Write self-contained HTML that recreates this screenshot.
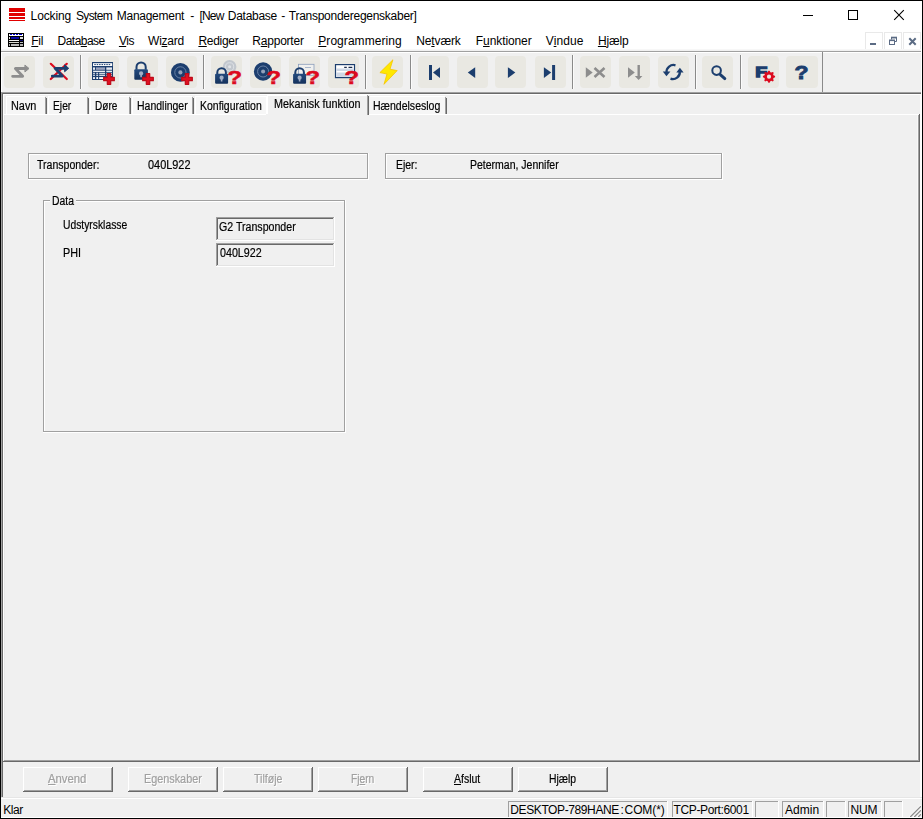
<!DOCTYPE html>
<html lang="da"><head><meta charset="utf-8"><title>Locking System Management</title>
<style>
html,body{margin:0;padding:0}
body{width:923px;height:819px;overflow:hidden;position:relative;background:#fff;font-family:"Liberation Sans",sans-serif}
#w{position:absolute;left:0;top:0;width:923px;height:819px;overflow:hidden}
#w div,#w span,#w svg{position:absolute}
#w span{white-space:pre}
#w u{text-decoration:underline;text-underline-offset:1px;text-decoration-thickness:1px}
</style></head><body><div id="w">
<div style="left:0px;top:0px;width:923px;height:819px;background:#000;"></div>
<div style="left:1px;top:1px;width:921px;height:817px;background:#fff;"></div>
<div style="left:9px;top:8px;width:16px;height:4px;background:#e10000;"></div>
<div style="left:9px;top:13px;width:16px;height:3px;background:#e10000;"></div>
<div style="left:9px;top:17px;width:16px;height:2px;background:#e10000;"></div>
<div style="left:9px;top:20px;width:16px;height:1px;background:#e10000;"></div>
<span style="left:30.60px;top:10.00px;font-size:12px;line-height:12px;letter-spacing:-0.125px;color:#000;">Locking </span>
<span style="left:76.00px;top:10.00px;font-size:12px;line-height:12px;letter-spacing:-0.669px;color:#000;">System </span>
<span style="left:116.80px;top:10.00px;font-size:12px;line-height:12px;letter-spacing:-0.275px;color:#000;">Management </span>
<span style="left:190.30px;top:10.00px;font-size:12px;line-height:12px;letter-spacing:0.300px;color:#000;">- </span>
<span style="left:199.60px;top:10.00px;font-size:12px;line-height:12px;letter-spacing:-0.861px;color:#000;">[New </span>
<span style="left:227.80px;top:10.00px;font-size:12px;line-height:12px;letter-spacing:-0.272px;color:#000;">Database </span>
<span style="left:281.20px;top:10.00px;font-size:12px;line-height:12px;color:#000;">- </span>
<span style="left:288.80px;top:10.00px;font-size:12px;line-height:12px;letter-spacing:-0.265px;color:#000;">Transponderegenskaber]</span>
<div style="left:803px;top:15px;width:10px;height:1px;background:#000;"></div>
<div style="left:848px;top:10px;width:10px;height:10px;background:transparent;border:1px solid #000;box-sizing:border-box"></div>
<svg style="left:893px;top:9px" width="12" height="12" viewBox="0 0 12 12"><path d="M1.2 1.2 L10.8 10.8 M10.8 1.2 L1.2 10.8" stroke="#000" stroke-width="1.1" fill="none"/></svg>
<div style="left:8px;top:33px;width:16px;height:14px;background:#000;"></div>
<div style="left:9px;top:34px;width:14px;height:2px;background:#fff;"></div>
<div style="left:10px;top:34px;width:2px;height:1px;background:#0000d0;"></div>
<div style="left:13px;top:34px;width:2px;height:1px;background:#0000d0;"></div>
<div style="left:16px;top:34px;width:2px;height:1px;background:#0000d0;"></div>
<div style="left:19px;top:34px;width:2px;height:1px;background:#0000d0;"></div>
<div style="left:21px;top:34px;width:1px;height:1px;background:#0000d0;"></div>
<div style="left:9px;top:37px;width:1px;height:2px;background:#e8e8e8;"></div>
<div style="left:11px;top:37px;width:8px;height:2px;background:#0a0aa8;"></div>
<div style="left:20px;top:37px;width:3px;height:2px;background:#e0e0e0;"></div>
<div style="left:9px;top:40px;width:10px;height:1px;background:#f0f0f0;"></div>
<div style="left:20px;top:40px;width:3px;height:1px;background:#101070;"></div>
<div style="left:9px;top:42px;width:10px;height:1px;background:#d8d8d0;"></div>
<div style="left:20px;top:42px;width:3px;height:1px;background:#c0c0c0;"></div>
<div style="left:9px;top:44px;width:1px;height:2px;background:#b0b0b0;"></div>
<div style="left:11px;top:44px;width:8px;height:2px;background:#b8b8b8;"></div>
<div style="left:20px;top:44px;width:3px;height:2px;background:#b0b0b0;"></div>
<span style="left:31.30px;top:35.00px;font-size:12px;line-height:12px;letter-spacing:-0.324px;color:#000;"><u>F</u>il</span>
<span style="left:57.60px;top:35.00px;font-size:12px;line-height:12px;letter-spacing:-0.547px;color:#000;">Data<u>b</u>ase</span>
<span style="left:118.90px;top:35.00px;font-size:12px;line-height:12px;letter-spacing:-0.484px;color:#000;"><u>V</u>is</span>
<span style="left:148.10px;top:35.00px;font-size:12px;line-height:12px;letter-spacing:-0.257px;color:#000;">Wi<u>z</u>ard</span>
<span style="left:198.40px;top:35.00px;font-size:12px;line-height:12px;letter-spacing:-0.290px;color:#000;"><u>R</u>ediger</span>
<span style="left:252.30px;top:35.00px;font-size:12px;line-height:12px;letter-spacing:-0.219px;color:#000;">R<u>a</u>pporter</span>
<span style="left:318.30px;top:35.00px;font-size:12px;line-height:12px;letter-spacing:0.046px;color:#000;"><u>P</u>rogrammering</span>
<span style="left:416.20px;top:35.00px;font-size:12px;line-height:12px;letter-spacing:-0.121px;color:#000;">Ne<u>t</u>værk</span>
<span style="left:475.80px;top:35.00px;font-size:12px;line-height:12px;letter-spacing:-0.090px;color:#000;">F<u>u</u>nktioner</span>
<span style="left:545.80px;top:35.00px;font-size:12px;line-height:12px;letter-spacing:0.074px;color:#000;">V<u>i</u>ndue</span>
<span style="left:597.90px;top:35.00px;font-size:12px;line-height:12px;letter-spacing:-0.169px;color:#000;"><u>H</u>jælp</span>
<div style="left:865px;top:32px;width:18px;height:18px;background:#fff;border:1px solid #e9e9e9;box-sizing:border-box"></div>
<div style="left:884px;top:32px;width:18px;height:18px;background:#fff;border:1px solid #e9e9e9;box-sizing:border-box"></div>
<div style="left:903px;top:32px;width:18px;height:18px;background:#fff;border:1px solid #e9e9e9;box-sizing:border-box"></div>
<div style="left:870px;top:43px;width:6px;height:2px;background:#5b6b84;"></div>
<svg style="left:888px;top:36px" width="10" height="10" viewBox="0 0 10 10"><g fill="none" stroke="#5b6b84"><path d="M3.5 3.5 V1.75 H8.5 V5.5 H6.5" stroke-width="1"/><path d="M3 1.5 H9" stroke-width="1.6"/><rect x="1.5" y="4.5" width="5" height="4" stroke-width="1"/><path d="M1 4.3 H7" stroke-width="1.6"/></g></svg>
<svg style="left:908px;top:37px" width="9" height="9" viewBox="0 0 9 9"><path d="M1.3 1.3 L7.7 7.7 M7.7 1.3 L1.3 7.7" stroke="#5b6b84" stroke-width="2" fill="none"/></svg>
<div style="left:1px;top:49px;width:920px;height:1px;background:#f7f7f7;"></div>
<div style="left:1px;top:50px;width:920px;height:1px;background:#f1f1f1;"></div>
<div style="left:1px;top:51px;width:920px;height:1px;background:#a0a0a0;"></div>
<div style="left:1px;top:52px;width:920px;height:1px;background:#fff;"></div>
<div style="left:1px;top:53px;width:920px;height:39px;background:#f0f0f0;"></div>
<div style="left:1px;top:52px;width:1px;height:40px;background:#fff;"></div>
<div style="left:4px;top:56px;width:31px;height:32px;background:#e9e8e2;border-radius:4px"></div>
<div style="left:43px;top:56px;width:31px;height:32px;background:#e9e8e2;border-radius:4px"></div>
<div style="left:88px;top:56px;width:31px;height:32px;background:#e9e8e2;border-radius:4px"></div>
<div style="left:127px;top:56px;width:31px;height:32px;background:#e9e8e2;border-radius:4px"></div>
<div style="left:166px;top:56px;width:31px;height:32px;background:#e9e8e2;border-radius:4px"></div>
<div style="left:211px;top:56px;width:31px;height:32px;background:#e9e8e2;border-radius:4px"></div>
<div style="left:250px;top:56px;width:31px;height:32px;background:#e9e8e2;border-radius:4px"></div>
<div style="left:289px;top:56px;width:31px;height:32px;background:#e9e8e2;border-radius:4px"></div>
<div style="left:328px;top:56px;width:31px;height:32px;background:#e9e8e2;border-radius:4px"></div>
<div style="left:372px;top:56px;width:31px;height:32px;background:#e9e8e2;border-radius:4px"></div>
<div style="left:418px;top:56px;width:31px;height:32px;background:#e9e8e2;border-radius:4px"></div>
<div style="left:457px;top:56px;width:31px;height:32px;background:#e9e8e2;border-radius:4px"></div>
<div style="left:495px;top:56px;width:31px;height:32px;background:#e9e8e2;border-radius:4px"></div>
<div style="left:535px;top:56px;width:31px;height:32px;background:#e9e8e2;border-radius:4px"></div>
<div style="left:580px;top:56px;width:31px;height:32px;background:#e9e8e2;border-radius:4px"></div>
<div style="left:619px;top:56px;width:31px;height:32px;background:#e9e8e2;border-radius:4px"></div>
<div style="left:658px;top:56px;width:31px;height:32px;background:#e9e8e2;border-radius:4px"></div>
<div style="left:702px;top:56px;width:31px;height:32px;background:#e9e8e2;border-radius:4px"></div>
<div style="left:748px;top:56px;width:31px;height:32px;background:#e9e8e2;border-radius:4px"></div>
<div style="left:786px;top:56px;width:32px;height:32px;background:#e9e8e2;border-radius:4px"></div>
<div style="left:80px;top:55px;width:1px;height:34px;background:#8a8a8a;"></div>
<div style="left:81px;top:55px;width:1px;height:34px;background:#fbfbfb;"></div>
<div style="left:203px;top:55px;width:1px;height:34px;background:#8a8a8a;"></div>
<div style="left:204px;top:55px;width:1px;height:34px;background:#fbfbfb;"></div>
<div style="left:365px;top:55px;width:1px;height:34px;background:#8a8a8a;"></div>
<div style="left:366px;top:55px;width:1px;height:34px;background:#fbfbfb;"></div>
<div style="left:410px;top:55px;width:1px;height:34px;background:#8a8a8a;"></div>
<div style="left:411px;top:55px;width:1px;height:34px;background:#fbfbfb;"></div>
<div style="left:572px;top:55px;width:1px;height:34px;background:#8a8a8a;"></div>
<div style="left:573px;top:55px;width:1px;height:34px;background:#fbfbfb;"></div>
<div style="left:695px;top:55px;width:1px;height:34px;background:#8a8a8a;"></div>
<div style="left:696px;top:55px;width:1px;height:34px;background:#fbfbfb;"></div>
<div style="left:740px;top:55px;width:1px;height:34px;background:#8a8a8a;"></div>
<div style="left:741px;top:55px;width:1px;height:34px;background:#fbfbfb;"></div>
<div style="left:822px;top:52px;width:1px;height:40px;background:#8a8a8a;"></div>
<svg style="left:0;top:52px" width="923" height="40" viewBox="0 0 923 40"><g transform="translate(10.2,12)" fill="none" stroke="#8d8d8d" stroke-width="2.8" stroke-linejoin="round" stroke-linecap="round"><path d="M2.4 12.3 H12.5 L5.2 4.5 H15"/><path d="M15 1.3 L18.8 4.5 L15 7.700 Z" fill="#8d8d8d" stroke-width="1"/></g><path d="M50.8 11.8 L66.8 27 M66.8 11.8 L50.8 27" stroke="#dc0a1e" stroke-width="2.2" stroke-linecap="round"/><g transform="translate(49.9,11.8)" fill="none" stroke="#1c3e6e" stroke-width="2.8" stroke-linejoin="round" stroke-linecap="round"><path d="M2.4 12.3 H12.5 L5.2 4.5 H15"/><path d="M15 1.3 L18.8 4.5 L15 7.700 Z" fill="#1c3e6e" stroke-width="1"/></g><rect x="92" y="10" width="21" height="18" fill="#1c3e6e"/><rect x="93" y="11.2" width="19.2" height="2.8" fill="#fff"/><path d="M94.3 12.6 H111" stroke="#1c3e6e" stroke-width="1" stroke-dasharray="1.5 0.9"/><rect x="93.1" y="15.4" width="1.8" height="2.4" fill="#fff"/><rect x="95.9" y="15.4" width="9.1" height="2.4" fill="#9ea6c0"/><rect x="106.3" y="15.4" width="5.7" height="2.4" fill="#e4e7ee"/><rect x="93.1" y="18.7" width="11.9" height="1.2" fill="#fff"/><rect x="106.3" y="18.7" width="5.7" height="1.2" fill="#fff"/><rect x="93.1" y="20.8" width="1.8" height="1.0" fill="#fff"/><rect x="96.3" y="20.8" width="1.8" height="1.0" fill="#fff"/><rect x="99.2" y="20.8" width="5.8" height="1.0" fill="#fff"/><rect x="106.3" y="20.8" width="5.7" height="1.0" fill="#fff"/><rect x="93.1" y="22.7" width="1.8" height="1.1" fill="#fff"/><rect x="96.3" y="22.7" width="1.8" height="1.1" fill="#fff"/><rect x="99.2" y="22.7" width="5.8" height="1.1" fill="#fff"/><rect x="106.3" y="22.7" width="5.7" height="1.1" fill="#fff"/><rect x="93.1" y="25.1" width="1.8" height="1.9" fill="#fff"/><rect x="96.3" y="25.1" width="1.8" height="1.9" fill="#fff"/><rect x="99.2" y="25.1" width="5.8" height="1.9" fill="#fff"/><rect x="106.3" y="25.1" width="5.7" height="1.9" fill="#fff"/><path d="M107.3 21.7 H110.7 V25.3 H114.3 V28.7 H110.7 V32.3 H107.3 V28.7 H103.7 V25.3 H107.3 Z" fill="#e01020" stroke="#bf0a18" stroke-width="1.2" stroke-linejoin="round"/><defs><linearGradient id="lg" x1="0" y1="0" x2="0" y2="1"><stop offset="0" stop-color="#234a7d"/><stop offset="1" stop-color="#15325c"/></linearGradient></defs><path d="M136.5 17.7 V14.999999999999998 a4.6 4.6 0 0 1 9.2 0 V17.7" fill="none" stroke="#1c3e6e" stroke-width="2"/><rect x="134.3" y="17.2" width="13.6" height="10.6" rx="1" fill="url(#lg)"/><circle cx="141.10000000000002" cy="21.44" r="2.1" fill="#a3b0c6"/><rect x="140.3" y="21.44" width="1.6" height="3.800" fill="#a3b0c6"/><path d="M146.3 21.7 H149.7 V25.3 H153.3 V28.7 H149.7 V32.3 H146.3 V28.7 H142.7 V25.3 H146.3 Z" fill="#e01020" stroke="#bf0a18" stroke-width="1.2" stroke-linejoin="round"/><circle cx="180.4" cy="20.4" r="9.4" fill="#1c3e6e"/><circle cx="180.4" cy="20.4" r="5.64" fill="none" stroke="#7088aa" stroke-width="0.9"/><circle cx="180.4" cy="20.4" r="2.07" fill="#93a1ba"/><path d="M185.3 21.7 H188.7 V25.3 H192.3 V28.7 H188.7 V32.3 H185.3 V28.7 H181.7 V25.3 H185.3 Z" fill="#e01020" stroke="#bf0a18" stroke-width="1.2" stroke-linejoin="round"/><circle cx="229.6" cy="14.8" r="6.8" fill="#c2c7ce"/><circle cx="229.6" cy="14.8" r="4.08" fill="none" stroke="#dfe2e6" stroke-width="0.9"/><circle cx="229.6" cy="14.8" r="1.50" fill="#e2e4e8"/><path d="M217.29999999999998 22.2 V20.5 a4.3 4.3 0 0 1 8.6 0 V22.2" fill="none" stroke="#1c3e6e" stroke-width="2"/><rect x="215.1" y="21.7" width="13" height="10" rx="1" fill="url(#lg)"/><circle cx="221.6" cy="25.70" r="2.1" fill="#a3b0c6"/><rect x="220.79999999999998" y="25.70" width="1.6" height="3.800" fill="#a3b0c6"/><text transform="translate(227.6,32.1) scale(1.36,1)" x="0" y="0" font-family="Liberation Sans, sans-serif" font-weight="bold" font-size="17.5" fill="#dc0a1e" stroke="#dc0a1e" stroke-width="0.5">?</text><circle cx="263.1" cy="19.5" r="9.2" fill="#1c3e6e"/><circle cx="263.1" cy="19.5" r="5.52" fill="none" stroke="#7088aa" stroke-width="0.9"/><circle cx="263.1" cy="19.5" r="2.02" fill="#93a1ba"/><text transform="translate(266.6,32.1) scale(1.36,1)" x="0" y="0" font-family="Liberation Sans, sans-serif" font-weight="bold" font-size="17.5" fill="#dc0a1e" stroke="#dc0a1e" stroke-width="0.5">?</text><rect x="298.5" y="12.3" width="15.5" height="11" fill="#f0f0ee" stroke="#8a9dbb" stroke-width="0.8"/><path d="M305 15.5 H311" stroke="#a9b6cb" stroke-width="1"/><path d="M295.3 22.2 V20.5 a4.3 4.3 0 0 1 8.6 0 V22.2" fill="none" stroke="#1c3e6e" stroke-width="2"/><rect x="293.1" y="21.7" width="13" height="10" rx="1" fill="url(#lg)"/><circle cx="299.6" cy="25.70" r="2.1" fill="#a3b0c6"/><rect x="298.8" y="25.70" width="1.6" height="3.800" fill="#a3b0c6"/><text transform="translate(305.6,32.1) scale(1.36,1)" x="0" y="0" font-family="Liberation Sans, sans-serif" font-weight="bold" font-size="17.5" fill="#dc0a1e" stroke="#dc0a1e" stroke-width="0.5">?</text><rect x="335.5" y="12.6" width="19" height="13" fill="#fff" stroke="#1c3e6e" stroke-width="1.2"/><rect x="336.3" y="16.500" width="17.400" height="2.500" fill="#cfd8e6"/><rect x="336.3" y="20.500" width="17.400" height="4.300" fill="#cfd8e6"/><path d="M344.2 15.3 H346.8 M348.500 15.300 H352.300" stroke="#1b2b4a" stroke-width="1.3"/><text transform="translate(344.6,32.1) scale(1.36,1)" x="0" y="0" font-family="Liberation Sans, sans-serif" font-weight="bold" font-size="17.5" fill="#dc0a1e" stroke="#dc0a1e" stroke-width="0.5">?</text><path d="M392.9 7.8 L379.9 20.6 L387 22 L384 32.300 L397.2 18.600 L390 17.200 Z" fill="#ffe800" stroke="#f6c400" stroke-width="0.8" stroke-linejoin="round"/><rect x="429" y="13" width="3" height="15" fill="#1c3e6e"/><path d="M433 20.500 L440 15.200 V26 Z" fill="#1c3e6e"/><path d="M467.800 20.500 L475.200 15.200 V26 Z" fill="#1c3e6e"/><path d="M515.300 20.500 L507.900 15.200 V26 Z" fill="#1c3e6e"/><path d="M551.200 20.500 L543.900 15.200 V26 Z" fill="#1c3e6e"/><rect x="552.100" y="13" width="3" height="15" fill="#1c3e6e"/><path d="M592.700 20.500 L585.800 15.200 V25.800 Z" fill="#8d8d8d"/><path d="M594.500 16 L604.500 25 M604.500 16 L594.500 25" stroke="#8d8d8d" stroke-width="2.600"/><path d="M634.800 20.500 L628 15.200 V25.800 Z" fill="#8d8d8d"/><path d="M638.700 13 V25" stroke="#8d8d8d" stroke-width="2.400"/><path d="M634.800 24 H642.400 L638.600 28 Z" fill="#8d8d8d"/><g fill="none" stroke="#1c3e6e" stroke-width="2.300"><path d="M675.500 13.300 A7 7 0 0 0 666.500 20.500"/><path d="M670.500 26.700 A7 7 0 0 0 679.800 19.500"/></g><path d="M662.800 19.600 H670.400 L666.500 24.200 Z" fill="#1c3e6e"/><path d="M676.300 20.400 H683.600 L679.900 15.800 Z" fill="#1c3e6e"/><circle cx="716.600" cy="18.600" r="4.300" fill="none" stroke="#1c3e6e" stroke-width="2"/><path d="M720.300 22.600 L724.800 26.600" stroke="#1c3e6e" stroke-width="3" stroke-linecap="round"/><text transform="translate(755.3,25.2) scale(1.3,1)" x="0" y="0" font-family="Liberation Sans, sans-serif" font-weight="bold" font-size="15.2" fill="#1c3e6e" stroke="#1c3e6e" stroke-width="1.3">F</text><path d="M775.07 24.10 L775.07 25.30 L773.50 26.06 L773.15 26.92 L773.72 28.57 L772.87 29.42 L771.22 28.85 L770.36 29.20 L769.60 30.77 L768.40 30.77 L767.64 29.20 L766.78 28.85 L765.13 29.42 L764.28 28.57 L764.85 26.92 L764.50 26.06 L762.93 25.30 L762.93 24.10 L764.50 23.34 L764.85 22.48 L764.28 20.83 L765.13 19.98 L766.78 20.55 L767.64 20.20 L768.40 18.63 L769.60 18.63 L770.36 20.20 L771.22 20.55 L772.87 19.98 L773.72 20.83 L773.15 22.48 L773.50 23.34 Z M771.1 24.7 a2.1 2.1 0 1 0 -4.2 0 a2.1 2.1 0 1 0 4.2 0 Z" fill="#dc0a1e" fill-rule="evenodd"/><text x="794.6" y="26.600" font-family="Liberation Sans, sans-serif" font-weight="bold" font-size="18.5" fill="#1c3e6e" stroke="#1c3e6e" stroke-width="0.9" textLength="14" lengthAdjust="spacingAndGlyphs">?</text></svg>
<div style="left:1px;top:92px;width:920px;height:1px;background:#a0a0a0;"></div>
<div style="left:1px;top:93px;width:920px;height:1px;background:#696969;"></div>
<div style="left:1px;top:93px;width:1px;height:704px;background:#a0a0a0;"></div>
<div style="left:2px;top:93px;width:1px;height:704px;background:#696969;"></div>
<div style="left:3px;top:94px;width:917px;height:703px;background:#f0f0f0;"></div>
<div style="left:3px;top:94px;width:917px;height:1px;background:#fff;"></div>
<div style="left:920px;top:94px;width:1px;height:703px;background:#fcfcfc;"></div>
<div style="left:921px;top:93px;width:1px;height:704px;background:#fff;"></div>
<div style="left:6px;top:96px;width:39px;height:18px;background:#f6f6f6;"></div>
<div style="left:6px;top:96px;width:39px;height:1px;background:#fff;"></div>
<div style="left:6px;top:96px;width:1px;height:18px;background:#fff;"></div>
<div style="left:45px;top:97px;width:1px;height:17px;background:#a0a0a0;"></div>
<div style="left:46px;top:98px;width:1px;height:16px;background:#696969;"></div>
<span style="left:10.80px;top:100.00px;font-size:12.3px;line-height:12.3px;transform:scaleX(0.8844);transform-origin:0 0;-webkit-text-stroke:0.2px #000;color:#000;">Navn</span>
<div style="left:48px;top:96px;width:39px;height:18px;background:#f6f6f6;"></div>
<div style="left:48px;top:96px;width:39px;height:1px;background:#fff;"></div>
<div style="left:48px;top:96px;width:1px;height:18px;background:#fff;"></div>
<div style="left:87px;top:97px;width:1px;height:17px;background:#a0a0a0;"></div>
<div style="left:88px;top:98px;width:1px;height:16px;background:#696969;"></div>
<span style="left:52.60px;top:100.00px;font-size:12.3px;line-height:12.3px;transform:scaleX(0.8366);transform-origin:0 0;-webkit-text-stroke:0.2px #000;color:#000;">Ejer</span>
<div style="left:90px;top:96px;width:39px;height:18px;background:#f6f6f6;"></div>
<div style="left:90px;top:96px;width:39px;height:1px;background:#fff;"></div>
<div style="left:90px;top:96px;width:1px;height:18px;background:#fff;"></div>
<div style="left:129px;top:97px;width:1px;height:17px;background:#a0a0a0;"></div>
<div style="left:130px;top:98px;width:1px;height:16px;background:#696969;"></div>
<span style="left:94.80px;top:100.00px;font-size:12.3px;line-height:12.3px;transform:scaleX(0.8160);transform-origin:0 0;-webkit-text-stroke:0.2px #000;color:#000;">Døre</span>
<div style="left:132px;top:96px;width:60px;height:18px;background:#f6f6f6;"></div>
<div style="left:132px;top:96px;width:60px;height:1px;background:#fff;"></div>
<div style="left:132px;top:96px;width:1px;height:18px;background:#fff;"></div>
<div style="left:192px;top:97px;width:1px;height:17px;background:#a0a0a0;"></div>
<div style="left:193px;top:98px;width:1px;height:16px;background:#696969;"></div>
<span style="left:136.60px;top:100.00px;font-size:12.3px;line-height:12.3px;transform:scaleX(0.8523);transform-origin:0 0;-webkit-text-stroke:0.2px #000;color:#000;">Handlinger</span>
<div style="left:195px;top:96px;width:72px;height:18px;background:#f6f6f6;"></div>
<div style="left:195px;top:96px;width:72px;height:1px;background:#fff;"></div>
<div style="left:195px;top:96px;width:1px;height:18px;background:#fff;"></div>
<div style="left:267px;top:97px;width:1px;height:17px;background:#a0a0a0;"></div>
<div style="left:268px;top:98px;width:1px;height:16px;background:#696969;"></div>
<span style="left:199.70px;top:100.00px;font-size:12.3px;line-height:12.3px;transform:scaleX(0.8514);transform-origin:0 0;-webkit-text-stroke:0.2px #000;color:#000;">Konfiguration</span>
<div style="left:370px;top:96px;width:75px;height:18px;background:#f6f6f6;"></div>
<div style="left:370px;top:96px;width:75px;height:1px;background:#fff;"></div>
<div style="left:445px;top:97px;width:1px;height:17px;background:#a0a0a0;"></div>
<div style="left:446px;top:98px;width:1px;height:16px;background:#696969;"></div>
<span style="left:372.60px;top:100.00px;font-size:12.3px;line-height:12.3px;transform:scaleX(0.8561);transform-origin:0 0;-webkit-text-stroke:0.2px #000;color:#000;">Hændelseslog</span>
<div style="left:4px;top:114px;width:915px;height:1px;background:#fff;"></div>
<div style="left:266px;top:96px;width:1px;height:19px;background:#f0f0f0;"></div>
<div style="left:267px;top:95px;width:100px;height:20px;background:#f0f0f0;"></div>
<div style="left:267px;top:95px;width:100px;height:1px;background:#fff;"></div>
<div style="left:266px;top:96px;width:2px;height:18px;background:#fff;"></div>
<div style="left:367px;top:95px;width:1px;height:20px;background:#a0a0a0;"></div>
<div style="left:368px;top:96px;width:1px;height:19px;background:#696969;"></div>
<span style="left:273.80px;top:98.00px;font-size:12.3px;line-height:12.3px;transform:scaleX(0.8777);transform-origin:0 0;-webkit-text-stroke:0.2px #000;color:#000;">Mekanisk funktion</span>
<div style="left:3px;top:94px;width:1px;height:666px;background:#fff;"></div>
<div style="left:4px;top:115px;width:1px;height:645px;background:#e8e8e8;"></div>
<div style="left:917px;top:115px;width:1px;height:645px;background:#f7f7f7;"></div>
<div style="left:918px;top:115px;width:1px;height:646px;background:#a0a0a0;"></div>
<div style="left:919px;top:114px;width:1px;height:648px;background:#696969;"></div>
<div style="left:4px;top:760px;width:915px;height:1px;background:#a0a0a0;"></div>
<div style="left:3px;top:761px;width:917px;height:1px;background:#696969;"></div>
<div style="left:28px;top:153px;width:340px;height:1px;background:#a0a0a0;"></div>
<div style="left:28px;top:153px;width:1px;height:26px;background:#a0a0a0;"></div>
<div style="left:367px;top:153px;width:1px;height:26px;background:#a0a0a0;"></div>
<div style="left:28px;top:178px;width:340px;height:1px;background:#a0a0a0;"></div>
<div style="left:29px;top:154px;width:338px;height:1px;background:#fff;"></div>
<div style="left:29px;top:154px;width:1px;height:24px;background:#fff;"></div>
<div style="left:368px;top:153px;width:1px;height:27px;background:#fff;"></div>
<div style="left:28px;top:179px;width:341px;height:1px;background:#fff;"></div>
<span style="left:37.30px;top:159.00px;font-size:12.3px;line-height:12.3px;transform:scaleX(0.8585);transform-origin:0 0;-webkit-text-stroke:0.2px #000;color:#000;">Transponder:</span>
<span style="left:147.60px;top:159.00px;font-size:12.3px;line-height:12.3px;transform:scaleX(0.8877);transform-origin:0 0;-webkit-text-stroke:0.2px #000;color:#000;">040L922</span>
<div style="left:385px;top:153px;width:337px;height:1px;background:#a0a0a0;"></div>
<div style="left:385px;top:153px;width:1px;height:26px;background:#a0a0a0;"></div>
<div style="left:721px;top:153px;width:1px;height:26px;background:#a0a0a0;"></div>
<div style="left:385px;top:178px;width:337px;height:1px;background:#a0a0a0;"></div>
<div style="left:386px;top:154px;width:335px;height:1px;background:#fff;"></div>
<div style="left:386px;top:154px;width:1px;height:24px;background:#fff;"></div>
<div style="left:722px;top:153px;width:1px;height:27px;background:#fff;"></div>
<div style="left:385px;top:179px;width:338px;height:1px;background:#fff;"></div>
<span style="left:395.60px;top:159.00px;font-size:12.3px;line-height:12.3px;transform:scaleX(0.8499);transform-origin:0 0;-webkit-text-stroke:0.2px #000;color:#000;">Ejer:</span>
<span style="left:470.20px;top:159.00px;font-size:12.3px;line-height:12.3px;transform:scaleX(0.8537);transform-origin:0 0;-webkit-text-stroke:0.2px #000;color:#000;">Peterman, Jennifer</span>
<div style="left:43px;top:200px;width:302px;height:1px;background:#a0a0a0;"></div>
<div style="left:43px;top:200px;width:1px;height:232px;background:#a0a0a0;"></div>
<div style="left:344px;top:200px;width:1px;height:232px;background:#a0a0a0;"></div>
<div style="left:43px;top:431px;width:302px;height:1px;background:#a0a0a0;"></div>
<div style="left:44px;top:201px;width:300px;height:1px;background:#fff;"></div>
<div style="left:44px;top:201px;width:1px;height:230px;background:#fff;"></div>
<div style="left:345px;top:200px;width:1px;height:233px;background:#fff;"></div>
<div style="left:43px;top:432px;width:303px;height:1px;background:#fff;"></div>
<div style="left:50px;top:196px;width:26px;height:10px;background:#f0f0f0;"></div>
<span style="left:51.80px;top:195.00px;font-size:12.3px;line-height:12.3px;transform:scaleX(0.8428);transform-origin:0 0;-webkit-text-stroke:0.2px #000;color:#000;">Data</span>
<span style="left:63.10px;top:219.00px;font-size:12.3px;line-height:12.3px;transform:scaleX(0.8387);transform-origin:0 0;-webkit-text-stroke:0.2px #000;color:#000;">Udstyrsklasse</span>
<span style="left:63.00px;top:247.00px;font-size:12.3px;line-height:12.3px;transform:scaleX(0.8780);transform-origin:0 0;-webkit-text-stroke:0.2px #000;color:#000;">PHI</span>
<div style="left:216px;top:217px;width:119px;height:24px;background:#f0f0f0;"></div>
<div style="left:216px;top:217px;width:118px;height:1px;background:#a0a0a0;"></div>
<div style="left:216px;top:217px;width:1px;height:23px;background:#a0a0a0;"></div>
<div style="left:217px;top:218px;width:116px;height:1px;background:#696969;"></div>
<div style="left:217px;top:218px;width:1px;height:21px;background:#696969;"></div>
<div style="left:216px;top:240px;width:119px;height:1px;background:#fff;"></div>
<div style="left:334px;top:217px;width:1px;height:24px;background:#fff;"></div>
<div style="left:217px;top:239px;width:117px;height:1px;background:#e3e3e3;"></div>
<div style="left:333px;top:218px;width:1px;height:22px;background:#e3e3e3;"></div>
<span style="left:219.10px;top:221.00px;font-size:12.3px;line-height:12.3px;transform:scaleX(0.8630);transform-origin:0 0;-webkit-text-stroke:0.2px #000;color:#000;">G2 Transponder</span>
<div style="left:216px;top:243px;width:119px;height:24px;background:#f0f0f0;"></div>
<div style="left:216px;top:243px;width:118px;height:1px;background:#a0a0a0;"></div>
<div style="left:216px;top:243px;width:1px;height:23px;background:#a0a0a0;"></div>
<div style="left:217px;top:244px;width:116px;height:1px;background:#696969;"></div>
<div style="left:217px;top:244px;width:1px;height:21px;background:#696969;"></div>
<div style="left:216px;top:266px;width:119px;height:1px;background:#fff;"></div>
<div style="left:334px;top:243px;width:1px;height:24px;background:#fff;"></div>
<div style="left:217px;top:265px;width:117px;height:1px;background:#e3e3e3;"></div>
<div style="left:333px;top:244px;width:1px;height:22px;background:#e3e3e3;"></div>
<span style="left:219.50px;top:247.00px;font-size:12.3px;line-height:12.3px;transform:scaleX(0.8710);transform-origin:0 0;-webkit-text-stroke:0.2px #000;color:#000;">040L922</span>
<div style="left:23px;top:767px;width:90px;height:25px;background:#f0f0f0;"></div>
<div style="left:23px;top:767px;width:89px;height:1px;background:#fff;"></div>
<div style="left:23px;top:767px;width:1px;height:24px;background:#fff;"></div>
<div style="left:23px;top:791px;width:90px;height:1px;background:#696969;"></div>
<div style="left:112px;top:767px;width:1px;height:25px;background:#696969;"></div>
<div style="left:24px;top:790px;width:88px;height:1px;background:#a0a0a0;"></div>
<div style="left:111px;top:768px;width:1px;height:23px;background:#a0a0a0;"></div>
<span style="left:48.30px;top:773.00px;font-size:12.3px;line-height:12.3px;transform:scaleX(0.9204);transform-origin:0 0;-webkit-text-stroke:0.2px #a0a0a0;color:#a0a0a0;text-shadow:1px 1px 0 #fff;"><u>A</u>nvend</span>
<div style="left:128px;top:767px;width:90px;height:25px;background:#f0f0f0;"></div>
<div style="left:128px;top:767px;width:89px;height:1px;background:#fff;"></div>
<div style="left:128px;top:767px;width:1px;height:24px;background:#fff;"></div>
<div style="left:128px;top:791px;width:90px;height:1px;background:#696969;"></div>
<div style="left:217px;top:767px;width:1px;height:25px;background:#696969;"></div>
<div style="left:129px;top:790px;width:88px;height:1px;background:#a0a0a0;"></div>
<div style="left:216px;top:768px;width:1px;height:23px;background:#a0a0a0;"></div>
<span style="left:143.80px;top:773.00px;font-size:12.3px;line-height:12.3px;transform:scaleX(0.8806);transform-origin:0 0;-webkit-text-stroke:0.2px #a0a0a0;color:#a0a0a0;text-shadow:1px 1px 0 #fff;">Egenskaber</span>
<div style="left:223px;top:767px;width:90px;height:25px;background:#f0f0f0;"></div>
<div style="left:223px;top:767px;width:89px;height:1px;background:#fff;"></div>
<div style="left:223px;top:767px;width:1px;height:24px;background:#fff;"></div>
<div style="left:223px;top:791px;width:90px;height:1px;background:#696969;"></div>
<div style="left:312px;top:767px;width:1px;height:25px;background:#696969;"></div>
<div style="left:224px;top:790px;width:88px;height:1px;background:#a0a0a0;"></div>
<div style="left:311px;top:768px;width:1px;height:23px;background:#a0a0a0;"></div>
<span style="left:254.10px;top:773.00px;font-size:12.3px;line-height:12.3px;transform:scaleX(0.8598);transform-origin:0 0;-webkit-text-stroke:0.2px #a0a0a0;color:#a0a0a0;text-shadow:1px 1px 0 #fff;">Tilføje</span>
<div style="left:318px;top:767px;width:90px;height:25px;background:#f0f0f0;"></div>
<div style="left:318px;top:767px;width:89px;height:1px;background:#fff;"></div>
<div style="left:318px;top:767px;width:1px;height:24px;background:#fff;"></div>
<div style="left:318px;top:791px;width:90px;height:1px;background:#696969;"></div>
<div style="left:407px;top:767px;width:1px;height:25px;background:#696969;"></div>
<div style="left:319px;top:790px;width:88px;height:1px;background:#a0a0a0;"></div>
<div style="left:406px;top:768px;width:1px;height:23px;background:#a0a0a0;"></div>
<span style="left:350.90px;top:773.00px;font-size:12.3px;line-height:12.3px;transform:scaleX(0.8312);transform-origin:0 0;-webkit-text-stroke:0.2px #a0a0a0;color:#a0a0a0;text-shadow:1px 1px 0 #fff;">Fj<u>e</u>rn</span>
<div style="left:423px;top:767px;width:90px;height:25px;background:#f0f0f0;"></div>
<div style="left:423px;top:767px;width:89px;height:1px;background:#fff;"></div>
<div style="left:423px;top:767px;width:1px;height:24px;background:#fff;"></div>
<div style="left:423px;top:791px;width:90px;height:1px;background:#696969;"></div>
<div style="left:512px;top:767px;width:1px;height:25px;background:#696969;"></div>
<div style="left:424px;top:790px;width:88px;height:1px;background:#a0a0a0;"></div>
<div style="left:511px;top:768px;width:1px;height:23px;background:#a0a0a0;"></div>
<span style="left:454.10px;top:773.00px;font-size:12.3px;line-height:12.3px;transform:scaleX(0.8549);transform-origin:0 0;-webkit-text-stroke:0.2px #000;color:#000;"><u>A</u>fslut</span>
<div style="left:518px;top:767px;width:90px;height:25px;background:#f0f0f0;"></div>
<div style="left:518px;top:767px;width:89px;height:1px;background:#fff;"></div>
<div style="left:518px;top:767px;width:1px;height:24px;background:#fff;"></div>
<div style="left:518px;top:791px;width:90px;height:1px;background:#696969;"></div>
<div style="left:607px;top:767px;width:1px;height:25px;background:#696969;"></div>
<div style="left:519px;top:790px;width:88px;height:1px;background:#a0a0a0;"></div>
<div style="left:606px;top:768px;width:1px;height:23px;background:#a0a0a0;"></div>
<span style="left:548.90px;top:773.00px;font-size:12.3px;line-height:12.3px;transform:scaleX(0.8436);transform-origin:0 0;-webkit-text-stroke:0.2px #000;color:#000;">Hjælp</span>
<div style="left:1px;top:797px;width:921px;height:1px;background:#e6e6e6;"></div>
<div style="left:1px;top:798px;width:921px;height:1px;background:#fff;"></div>
<div style="left:1px;top:799px;width:921px;height:19px;background:#f0f0f0;"></div>
<span style="left:3.30px;top:804.00px;font-size:12px;line-height:12px;letter-spacing:-0.486px;color:#000;">Klar</span>
<div style="left:508px;top:801px;width:159px;height:1px;background:#a0a0a0;"></div>
<div style="left:508px;top:801px;width:1px;height:17px;background:#a0a0a0;"></div>
<div style="left:667px;top:801px;width:1px;height:17px;background:#fff;"></div>
<div style="left:672px;top:801px;width:80px;height:1px;background:#a0a0a0;"></div>
<div style="left:672px;top:801px;width:1px;height:17px;background:#a0a0a0;"></div>
<div style="left:752px;top:801px;width:1px;height:17px;background:#fff;"></div>
<span style="left:673.50px;top:804.00px;font-size:12px;line-height:12px;letter-spacing:-0.373px;color:#000;">TCP-Port:6001</span>
<div style="left:755px;top:801px;width:23px;height:1px;background:#a0a0a0;"></div>
<div style="left:755px;top:801px;width:1px;height:17px;background:#a0a0a0;"></div>
<div style="left:778px;top:801px;width:1px;height:17px;background:#fff;"></div>
<div style="left:782px;top:801px;width:41px;height:1px;background:#a0a0a0;"></div>
<div style="left:782px;top:801px;width:1px;height:17px;background:#a0a0a0;"></div>
<div style="left:823px;top:801px;width:1px;height:17px;background:#fff;"></div>
<span style="left:785.00px;top:804.00px;font-size:12px;line-height:12px;letter-spacing:0.057px;color:#000;">Admin</span>
<div style="left:826px;top:801px;width:19px;height:1px;background:#a0a0a0;"></div>
<div style="left:826px;top:801px;width:1px;height:17px;background:#a0a0a0;"></div>
<div style="left:845px;top:801px;width:1px;height:17px;background:#fff;"></div>
<div style="left:848px;top:801px;width:33px;height:1px;background:#a0a0a0;"></div>
<div style="left:848px;top:801px;width:1px;height:17px;background:#a0a0a0;"></div>
<div style="left:881px;top:801px;width:1px;height:17px;background:#fff;"></div>
<span style="left:850.50px;top:804.00px;font-size:12px;line-height:12px;letter-spacing:-0.143px;color:#000;">NUM</span>
<div style="left:884px;top:801px;width:18px;height:1px;background:#a0a0a0;"></div>
<div style="left:884px;top:801px;width:1px;height:17px;background:#a0a0a0;"></div>
<div style="left:902px;top:801px;width:1px;height:17px;background:#fff;"></div>
<span style="left:510.30px;top:804.00px;font-size:12px;line-height:12px;letter-spacing:-0.393px;color:#000;">DESKTOP-789HANE </span>
<span style="left:620.60px;top:804.00px;font-size:12px;line-height:12px;color:#000;">: </span>
<span style="left:624.60px;top:804.00px;font-size:12px;line-height:12px;letter-spacing:-0.112px;color:#000;">COM(*)</span>
<div style="left:1px;top:817px;width:921px;height:1px;background:#fff;"></div>
<svg style="left:908px;top:804px" width="13" height="13" viewBox="908 804 13 13"><g stroke="#fff" stroke-width="1.2" stroke-linecap="butt"><path d="M909.3 816.8 L921 805.1 M913.3 816.8 L921 809.1 M917.3 816.8 L921 813.1"/></g><g stroke="#8c8c8c" stroke-width="1.3"><path d="M910.2 817 L921 806.2 M914.2 817 L921 810.2 M918.2 817 L921 814.2"/></g></svg>
</div></body></html>
